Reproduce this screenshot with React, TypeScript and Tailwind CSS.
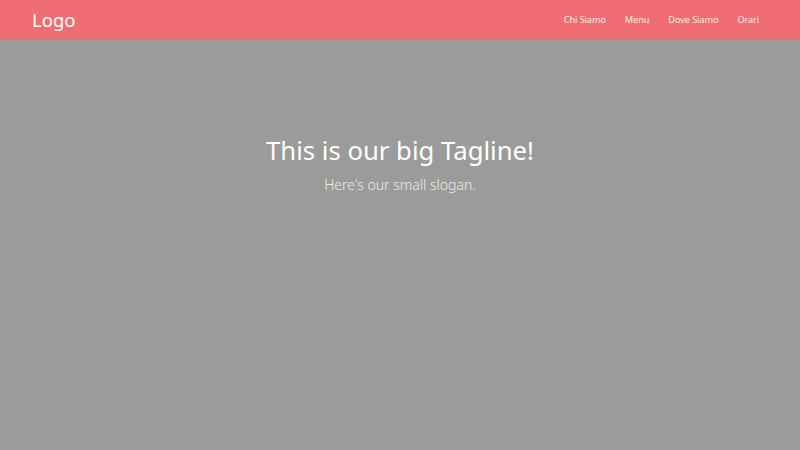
import React from "react";

export default function App() {
  const font = { fontFamily: '"Segoe UI", "Noto Sans", "Open Sans", sans-serif' };
  return (
    <div className="w-[800px] h-[450px] bg-[#9b9b9b] flex flex-col" style={font}>
      <header className="h-[40px] bg-[#f06e73] flex items-center justify-between pl-[32px] pr-[41px]">
        <div className="text-white text-[18.5px] leading-none">Logo</div>
        <nav className="flex items-center gap-[19px] text-[9.2px] tracking-[-0.1px] text-[#fde8e8]">
          <span>Chi Siamo</span>
          <span>Menu</span>
          <span>Dove Siamo</span>
          <span>Orari</span>
        </nav>
      </header>
      <main className="flex flex-col items-center pt-[94px]">
        <h1 className="text-white text-[25.7px] leading-[34px] font-normal">This is our big Tagline!</h1>
        <p className="text-[#ececec] text-[14px] font-light mt-[6px]">Here's our small slogan.</p>
      </main>
    </div>
  );
}
